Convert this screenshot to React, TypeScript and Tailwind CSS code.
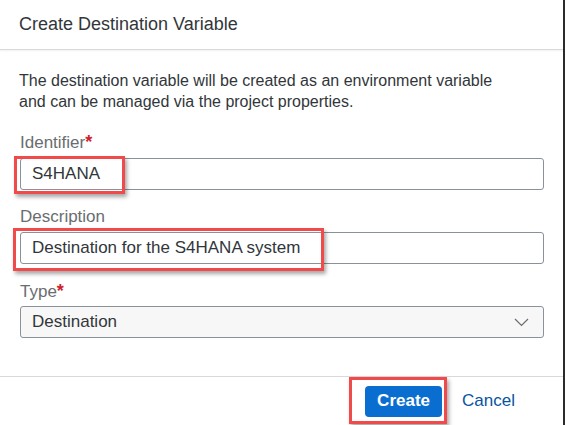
function Field({
  label,
  required,
  value,
  select,
  className,
}: {
  label: string;
  required?: boolean;
  value: string;
  select?: boolean;
  className?: string;
}) {
  return (
    <div className={className}>
      <div className="h-[21px] leading-[21px] text-[17px] text-[#6a6d70]">
        {label}
        {required && <span className="text-[#d0202a] font-bold text-[18px]">*</span>}
      </div>
      <div
        className={`flex items-center h-[32px] border border-[#89919a] rounded-[3px] pl-[11px] pr-[14px] text-[17px] text-[#32363a] ${
          select ? "bg-[#f7f7f7] mt-[4px]" : "bg-white mt-[5px]"
        }`}
      >
        <span className="flex-1">{value}</span>
        {select && (
          <svg width="15" height="9" viewBox="0 0 15 9" fill="none">
            <path d="M1 1L7.5 7.5L14 1" stroke="#6a6d70" strokeWidth="1.2" />
          </svg>
        )}
      </div>
    </div>
  );
}

export default function App() {
  return (
    <div
      className="relative flex w-[566px] h-[425px] bg-white overflow-hidden"
      style={{ fontFamily: '"Liberation Sans", Arial, sans-serif' }}
    >
      <div className="flex flex-col w-[563px] h-full">
        <div className="h-[50px] flex items-center pl-[19px] border-b border-[#d9d9d9] shadow-[0_1px_2px_rgba(0,0,0,0.06)] text-[18px] text-[#32363a]">
          Create Destination Variable
        </div>

        <div className="flex-1 pl-[20px] pr-[19px] pt-[20px]">
          <p className="text-[16px] leading-[21px] text-[#32363a] -ml-[1px]">
            The destination variable will be created as an environment variable
            <br />
            and can be managed via the project properties.
          </p>

          <Field className="mt-[20px]" label="Identifier" required value="S4HANA" />
          <Field className="mt-[16px]" label="Description" value="Destination for the S4HANA system" />
          <Field className="mt-[17px]" label="Type" required value="Destination" select />
        </div>

        <div className="h-[49px] border-t border-[#d9d9d9] flex items-center justify-end pr-[48px] gap-[20px]">
          <button className="h-[31px] w-[77px] rounded-[4px] bg-[#0a6ed1] text-white text-[17px] font-bold">
            Create
          </button>
          <button className="text-[17px] text-[#0854a0]">Cancel</button>
        </div>
      </div>
      <div className="w-[2px] h-full bg-[#2b2b2b]" />

      {/* annotation boxes */}
      <div className="absolute left-[14px] top-[156px] w-[111px] h-[38px] border-[3px] border-[#f04a4a] shadow-[2px_3px_4px_rgba(0,0,0,0.35)]" />
      <div className="absolute left-[13px] top-[228px] w-[311px] h-[43px] border-[3px] border-[#f04a4a] shadow-[2px_3px_4px_rgba(0,0,0,0.35)]" />
      <div className="absolute left-[349px] top-[377px] w-[98px] h-[47px] border-[3px] border-[#f04a4a] shadow-[2px_3px_4px_rgba(0,0,0,0.35)]" />
    </div>
  );
}
